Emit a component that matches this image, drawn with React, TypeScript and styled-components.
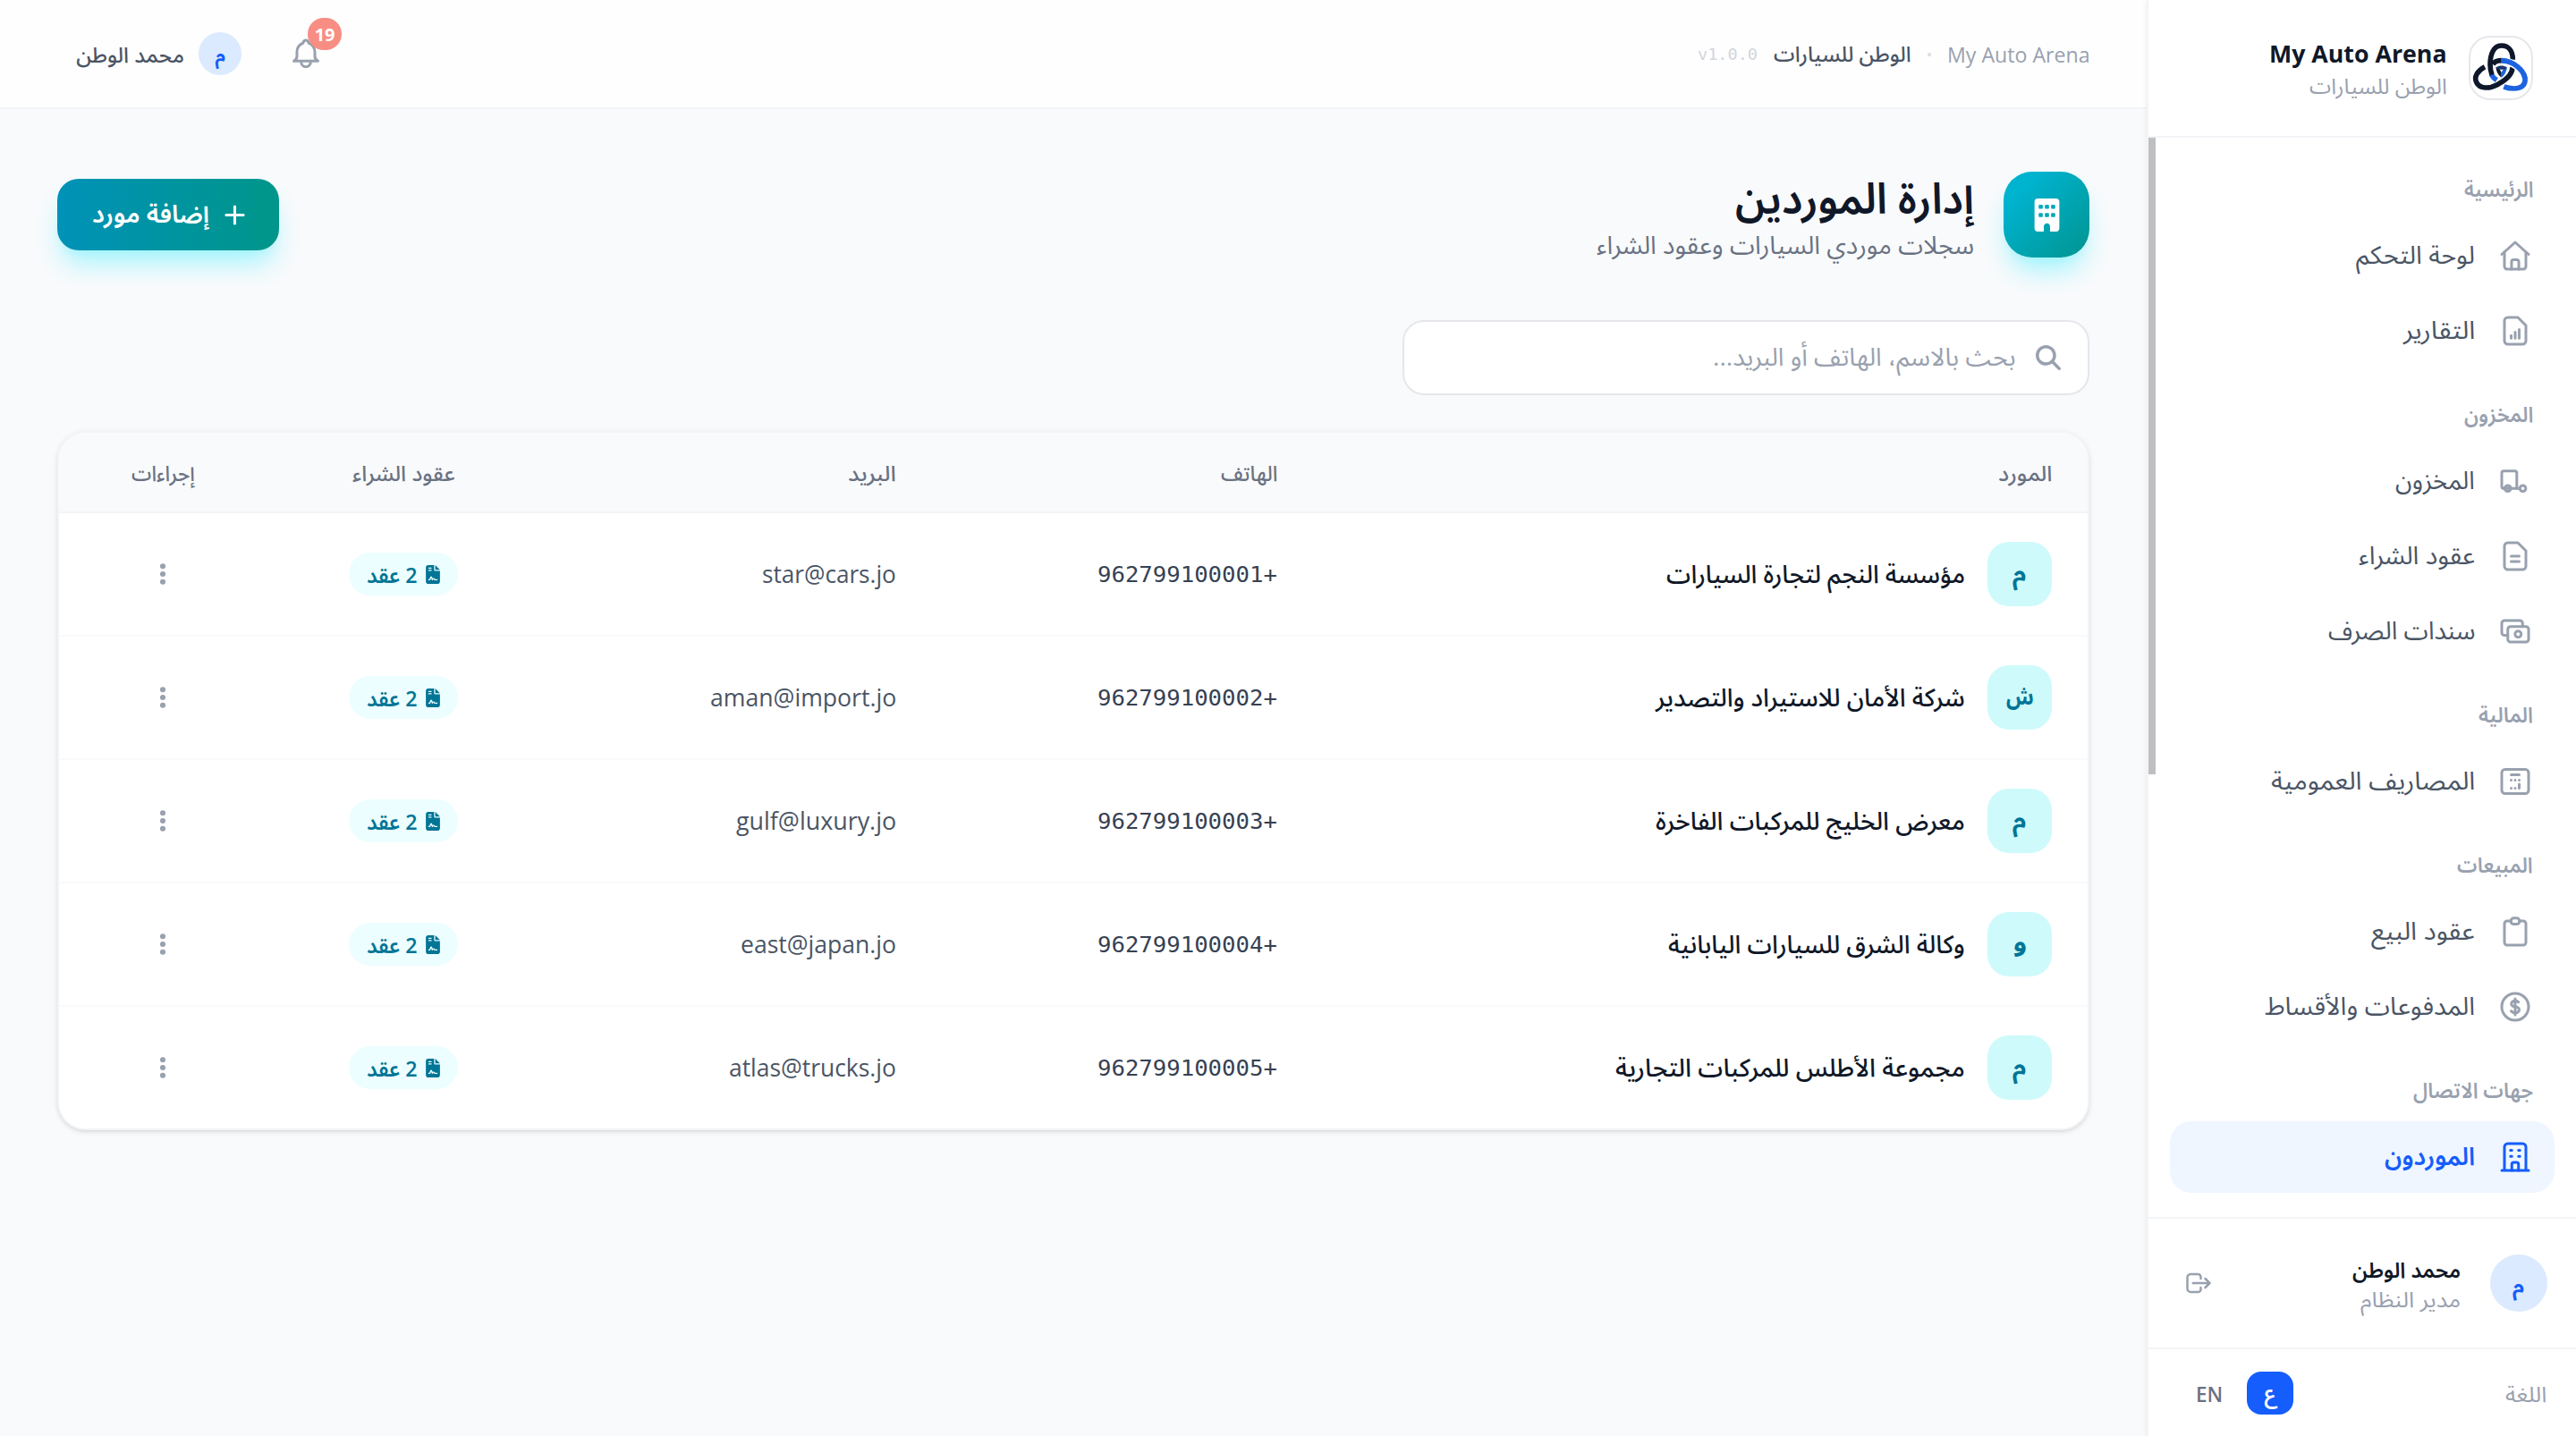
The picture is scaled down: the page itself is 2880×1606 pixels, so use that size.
import React, { useLayoutEffect, useRef, useState } from "react";
import styled, { createGlobalStyle } from "styled-components";
import { FaBuilding, FaFileContract, FaEllipsisVertical, FaMagnifyingGlass } from "react-icons/fa6";

const Global = createGlobalStyle`
  * { box-sizing: border-box; }
  html, body { margin: 0; padding: 0; }
  body {
    background: #f9fafc;
    font-family: "Open Sans", "Noto Sans", "Noto Sans Arabic", "DejaVu Sans", sans-serif;
    -webkit-font-smoothing: auto;
  }
`;

/* ---------- text that fills a known width ---------- */

type TextProps = { $size: number; $weight?: number; $color?: string; $mono?: boolean; $width: number; $drop?: number };

const TextBox = styled.span<TextProps>`
  display: block;
  flex: none;
  width: ${(p) => p.$width}px;
  height: ${(p) => Math.round(p.$size * 1.4)}px;
  line-height: ${(p) => Math.round(p.$size * 1.4)}px;
  margin-top: ${(p) => (p.$drop || 0) * 2}px;
  font-size: ${(p) => p.$size}px;
  font-weight: ${(p) => p.$weight || 400};
  color: ${(p) => p.$color || "inherit"};
  ${(p) => p.$mono && `font-family: "DejaVu Sans Mono", "Liberation Mono", monospace;`}
  white-space: nowrap;
`;

const TextInner = styled.span`
  display: inline-block;
  transform-origin: 100% 50%;
`;

function Fit({
  text,
  width,
  size,
  weight,
  color,
  mono,
  drop,
}: {
  text: string;
  width: number;
  size: number;
  weight?: number;
  color?: string;
  mono?: boolean;
  drop?: number;
}) {
  const ref = useRef<HTMLSpanElement>(null);
  const [scale, setScale] = useState(1);
  useLayoutEffect(() => {
    const measure = () => {
      if (ref.current && ref.current.offsetWidth) setScale(width / ref.current.offsetWidth);
    };
    measure();
    document.fonts?.ready.then(measure);
  }, [text, width]);
  return (
    <TextBox $size={size} $weight={weight} $color={color} $mono={mono} $width={width} $drop={drop}>
      <TextInner ref={ref} style={{ transform: `scaleX(${scale})` }}>
        {text}
      </TextInner>
    </TextBox>
  );
}

/* ---------- icons ---------- */

const Svg = styled.svg<{ $size: number; $stroke?: number }>`
  display: block;
  flex: none;
  width: ${(p) => p.$size}px;
  height: ${(p) => p.$size}px;
  fill: none;
  stroke: currentColor;
  stroke-width: ${(p) => p.$stroke || 2};
  stroke-linecap: round;
  stroke-linejoin: round;
`;

const icons = {
  home: (
    <>
      <path d="M2 11 12 2l10 9" />
      <path d="M4 9.500V20a2 2 0 0 0 2 2h12a2 2 0 0 0 2-2V9.500" />
      <path d="M9.300 22v-5.500a1.500 1.500 0 0 1 1.500-1.500h2.400a1.500 1.500 0 0 1 1.500 1.500V22" />
    </>
  ),
  report: (
    <>
      <path d="M14 2H6.500A2.500 2.500 0 0 0 4 4.500v15A2.500 2.500 0 0 0 6.500 22h11a2.500 2.500 0 0 0 2.500-2.500V8z" />
      <path d="M9 15.500v2M12 13v4.500M15 11v6.500" />
    </>
  ),
  truck: (
    <>
      <path d="M4.500 17.500H3.500A1.500 1.500 0 0 1 2 16V6a1.500 1.500 0 0 1 1.500-1.500H12A1.500 1.500 0 0 1 13.200 6v11.500" />
      <path d="M3 17.500h12.500" />
      <circle cx="6.500" cy="17.500" r="2.200" />
      <circle cx="17.700" cy="17.500" r="2.200" />
    </>
  ),
  document: (
    <>
      <path d="M14 2H6.500A2.500 2.500 0 0 0 4 4.500v15A2.500 2.500 0 0 0 6.500 22h11a2.500 2.500 0 0 0 2.500-2.500V8z" />
      <path d="M9 12h6M9 16h6" />
    </>
  ),
  cash: (
    <>
      <path d="M6.500 15H4a2 2 0 0 1-2-2V6a2 2 0 0 1 2-2h11.500a2 2 0 0 1 2 2v2" />
      <rect x="6.500" y="8.500" width="15.500" height="11.500" rx="2" />
      <circle cx="14.200" cy="14.200" r="2.300" />
    </>
  ),
  calculator: (
    <>
      <rect x="2" y="3" width="20" height="18" rx="2.500" />
      <path d="M9 7h6M9 11h.01M12 11h.01M15 11h.01M9 17h.01M12 17h.01M15 14v3" />
    </>
  ),
  clipboard: (
    <>
      <path d="M9 4H6a2 2 0 0 0-2 2v14a2 2 0 0 0 2 2h12a2 2 0 0 0 2-2V6a2 2 0 0 0-2-2h-3" />
      <rect x="8.700" y="1.800" width="6.600" height="4.600" rx="2.300" />
    </>
  ),
  dollar: (
    <>
      <circle cx="12" cy="12" r="10" />
      <path d="M12 6v12m-3-2.818.879.659c1.171.879 3.070.879 4.242 0 1.172-.879 1.172-2.303 0-3.182C13.536 12.219 12.768 12 12 12c-.725 0-1.450-.220-2.003-.659-1.106-.879-1.106-2.303 0-3.182s2.900-.879 4.006 0l.415.330" />
    </>
  ),
  building: (
    <>
      <path d="M2 22h20M4 22V4.500A2.500 2.500 0 0 1 6.500 2h11A2.500 2.500 0 0 1 20 4.500V22" />
      <path d="M9.500 22v-4.500a1.500 1.500 0 0 1 1.500-1.500h2a1.500 1.500 0 0 1 1.500 1.500V22" />
      <path d="M8.500 7h1M14.500 7h1M8.500 11.500h1M14.500 11.500h1" />
    </>
  ),
  bell: (
    <>
      <path d="M10 4a2 2 0 1 1 4 0c3 1.200 4.700 3.800 4.700 7v3.200c0 1.400 1 2.600 2.300 3.300H3c1.300-.7 2.300-1.900 2.300-3.300V11c0-3.200 1.700-5.800 4.700-7z" />
      <path d="M8.500 17.500v.9a3.500 3.500 0 0 0 7 0v-.9" />
    </>
  ),
  logout: (
    <>
      <path d="M14 8V6.500A2.500 2.500 0 0 0 11.500 4H5a3 3 0 0 0-3 3v10a3 3 0 0 0 3 3h6.500a2.500 2.500 0 0 0 2.500-2.500V16" />
      <path d="M18 8l4 4-4 4M7 12h15" />
    </>
  ),
  plus: <path d="M12 2v20M2 12h20" />,
};

type IconName = keyof typeof icons;

function Icon({ name, size = 36, stroke }: { name: IconName; size?: number; stroke?: number }) {
  return (
    <Svg $size={size} $stroke={stroke} viewBox="0 0 24 24">
      {icons[name]}
    </Svg>
  );
}

const LogoSvg = styled.svg`
  display: block;
  width: 68px;
  height: 68px;
`;

function Logo() {
  const dark = "#0f172a";
  const blue = "#1d63e0";
  return (
    <LogoSvg viewBox="18 18 204 204" fill="none">
      <path d="M130 183c11 4 22 6 34 6 26 0 40-13 37-34-4-28-38-58-79-60" stroke={blue} strokeWidth="17" />
      <path d="M122 95c-13 0-23 3-29 13" stroke={dark} strokeWidth="17" />
      <path d="M66 116c-24 13-37 33-28 52 10 22 42 23 70 8 30-16 52-36 51-60" stroke="#fff" strokeWidth="24" />
      <path d="M84 134c4 10 12 19 22 26" stroke="#fff" strokeWidth="24" />
      <path d="M66 116c-24 13-37 33-28 52 10 22 42 23 70 8 30-16 52-36 51-60" stroke={dark} strokeWidth="17" />
      <path d="M88 142c4 7 10 14 18 19" stroke={blue} strokeWidth="17" />
      <path d="M86 136c-2-7-3-14-3-22" stroke="#fff" strokeWidth="25" />
      <path d="M160 92c0-29-14-47-38-47-26 0-38 29-38 63 0 12 2 24 6 35" stroke={dark} strokeWidth="17" />
      <path d="M140 97c24 8 46 25 54 43" stroke="#fff" strokeWidth="25" />
      <path d="M122 95c41 2 75 32 79 60" stroke={blue} strokeWidth="17" />
      <path d="M103 117c2 15 8 28 19 35v-17l-7-12z" fill={dark} />
      <path d="M141 117c-2 15-8 28-19 35v-17l7-12z" fill={blue} />
      <path d="M104 118c11-7 25-7 36 0l-7 7h-22z" fill="#1b3568" />
    </LogoSvg>
  );
}

/* ---------- shell ---------- */

const Page = styled.div`
  display: flex;
  width: 2880px;
  height: 1606px;
  overflow: hidden;
  direction: rtl;
  background: #f9fafc;
`;

const Sidebar = styled.aside`
  position: relative;
  z-index: 1;
  flex: none;
  display: flex;
  flex-direction: column;
  width: 480px;
  background: #fff;
  border-left: 2px solid #f3f4f6;
  box-shadow: 0 2px 6px rgba(0, 0, 0, 0.08);
`;

const Brand = styled.div`
  display: flex;
  align-items: center;
  gap: 24px;
  height: 154px;
  padding: 0 48px 0 0;
  border-bottom: 2px solid #f3f4f6;
`;

const LogoTile = styled.div`
  width: 72px;
  height: 72px;
  border: 2px solid #e5e7eb;
  border-radius: 24px;
  overflow: hidden;
`;

const Stack = styled.div<{ $gap?: number; $top?: number }>`
  display: flex;
  flex-direction: column;
  align-items: flex-start;
  gap: ${(p) => p.$gap || 0}px;
  padding-top: ${(p) => p.$top || 0}px;
`;

const NavArea = styled.div`
  flex: 1;
  display: flex;
  min-height: 0;
`;

const Nav = styled.nav`
  flex: 1;
  padding: 4px 24px 0 16px;
`;

const ScrollThumb = styled.div`
  width: 8px;
  height: 712px;
  background: #bfbfc1;
`;

const Group = styled.div`
  display: flex;
  flex-direction: column;
  gap: 4px;
`;

const GroupTitle = styled.div`
  display: flex;
  align-items: flex-end;
  height: 84px;
  padding: 0 24px 14px 0;
`;

const NavItem = styled.a<{ $active?: boolean }>`
  display: flex;
  align-items: center;
  gap: 27px;
  height: 80px;
  padding: 0 26px;
  border-radius: 24px;
  background: ${(p) => (p.$active ? "#eff6ff" : "transparent")};
  color: ${(p) => (p.$active ? "#155dfc" : "#99a1af")};
`;

const UserPanel = styled.div`
  display: flex;
  align-items: center;
  height: 146px;
  padding: 0 32px 0 41px;
  border-top: 2px solid #f3f4f6;
  color: #99a1af;
`;

const UserText = styled(Stack)`
  flex: 1;
  padding-right: 33px;
`;

const LanguagePanel = styled.div`
  display: flex;
  align-items: center;
  height: 99px;
  padding: 0 33px 0 34px;
  border-top: 2px solid #f3f4f6;
`;

const Languages = styled.div`
  display: flex;
  gap: 8px;
  margin-right: auto;
`;

const LangButton = styled.div<{ $on?: boolean }>`
  display: flex;
  align-items: center;
  justify-content: center;
  width: ${(p) => (p.$on ? 52 : 68)}px;
  height: 48px;
  border-radius: 16px;
  background: ${(p) => (p.$on ? "#155dfc" : "transparent")};
`;

const Circle = styled.div<{ $size: number }>`
  flex: none;
  display: flex;
  align-items: center;
  justify-content: center;
  width: ${(p) => p.$size}px;
  height: ${(p) => p.$size}px;
  border-radius: 50%;
  background: #dbeafe;
`;

/* ---------- main column ---------- */

const Main = styled.main`
  flex: 1;
  min-width: 0;
`;

const TopBar = styled.header`
  display: flex;
  align-items: center;
  justify-content: space-between;
  height: 122px;
  padding: 0 64px 0 85px;
  background: #fefefe;
  border-bottom: 2px solid #f3f4f6;
`;

const Crumbs = styled.div`
  display: flex;
  align-items: center;
`;

const Dot = styled.i`
  width: 4px;
  height: 4px;
  margin: 2px 18px 0 18px;
  border-radius: 50%;
  background: #d9dce1;
`;

const Version = styled.div`
  margin: 0 18px 0 0;
`;

const Account = styled.div`
  display: flex;
  align-items: center;
  gap: 16px;
`;

const Bell = styled.div`
  position: relative;
  margin-left: 38px;
  color: #99a1af;
`;

const Badge = styled.div`
  position: absolute;
  left: 20px;
  top: -22px;
  display: flex;
  align-items: center;
  justify-content: center;
  width: 38px;
  height: 36px;
  border-radius: 18px;
  background: #f88d83;
`;

const Content = styled.div`
  padding: 70px 64px;
`;

const Heading = styled.div`
  display: flex;
  align-items: center;
  height: 96px;
`;

const HeadingTile = styled.div`
  display: flex;
  align-items: center;
  justify-content: center;
  width: 96px;
  height: 96px;
  margin-left: 33px;
  border-radius: 32px;
  color: #fff;
  background: linear-gradient(135deg, #00b3cf 20%, #009490);
  box-shadow: 0 20px 30px -6px #a2f4fd, 0 8px 12px -8px #a2f4fd;
`;

const AddButton = styled.button`
  display: flex;
  align-items: center;
  gap: 17px;
  width: 248px;
  height: 80px;
  margin: 0 auto 0 0;
  padding: 0 38px 0 0;
  border: 0;
  border-radius: 24px;
  color: #fff;
  font-family: inherit;
  background: linear-gradient(to right, #0092b8, #009689);
  box-shadow: 0 20px 30px -6px #a2f4fd, 0 8px 12px -8px #a2f4fd;
`;

const Search = styled.div`
  display: flex;
  align-items: center;
  gap: 22px;
  width: 768px;
  height: 84px;
  margin-top: 70px;
  padding: 0 30px;
  border: 2px solid #e5e7eb;
  border-radius: 24px;
  background: #fff;
  color: #99a1af;
`;

const Card = styled.section`
  margin-top: 40px;
  border: 2px solid #f3f4f6;
  border-radius: 32px;
  overflow: hidden;
  background: #fff;
  box-shadow: 0 2px 6px rgba(0, 0, 0, 0.1), 0 2px 4px -2px rgba(0, 0, 0, 0.1);
`;

const Row = styled.div<{ $head?: boolean }>`
  display: grid;
  grid-template-columns: 866px 426px 438px 306px 232px;
  align-items: center;
  height: ${(p) => (p.$head ? 90 : 138)}px;
  border-bottom: 2px solid ${(p) => (p.$head ? "#f3f4f6" : "#f9fafb")};
  background: ${(p) => (p.$head ? "#f9fafc" : "#fff")};
  &:last-child {
    height: 136px;
    border-bottom: 0;
  }
`;

const Cell = styled.div<{ $center?: boolean }>`
  display: flex;
  align-items: center;
  justify-content: ${(p) => (p.$center ? "center" : "flex-start")};
  gap: 25px;
  padding: 0 40px;
  color: #99a1af;
`;

const Initial = styled.div`
  display: flex;
  align-items: center;
  justify-content: center;
  width: 72px;
  height: 72px;
  border-radius: 24px;
  background: #cefafb;
`;

const Pill = styled.div`
  display: flex;
  align-items: center;
  gap: 9px;
  width: 122px;
  height: 48px;
  padding: 0 20px;
  border-radius: 24px;
  background: #ecfeff;
  color: #007595;
`;

const ContractIcon = styled(FaFileContract)`
  flex: none;
  width: 16px;
  height: 21px;
`;

/* ---------- data ---------- */

const groups: { title: string; width: number; items: { label: string; width: number; icon: IconName; active?: boolean }[] }[] = [
  {
    title: "الرئيسية",
    width: 77,
    items: [
      { label: "لوحة التحكم", width: 133, icon: "home" },
      { label: "التقارير", width: 80, icon: "report" },
    ],
  },
  {
    title: "المخزون",
    width: 77,
    items: [
      { label: "المخزون", width: 89, icon: "truck" },
      { label: "عقود الشراء", width: 130, icon: "document" },
      { label: "سندات الصرف", width: 164, icon: "cash" },
    ],
  },
  { title: "المالية", width: 61, items: [{ label: "المصاريف العمومية", width: 228, icon: "calculator" }] },
  {
    title: "المبيعات",
    width: 85,
    items: [
      { label: "عقود البيع", width: 116, icon: "clipboard" },
      { label: "المدفوعات والأقساط", width: 235, icon: "dollar" },
    ],
  },
  { title: "جهات الاتصال", width: 134, items: [{ label: "الموردون", width: 101, icon: "building", active: true }] },
];

const suppliers = [
  { initial: "م", name: "مؤسسة النجم لتجارة السيارات", width: 334, phone: "+962799100001", mail: "star@cars.jo", mailWidth: 150 },
  { initial: "ش", name: "شركة الأمان للاستيراد والتصدير", width: 346, phone: "+962799100002", mail: "aman@import.jo", mailWidth: 208 },
  { initial: "م", name: "معرض الخليج للمركبات الفاخرة", width: 346, phone: "+962799100003", mail: "gulf@luxury.jo", mailWidth: 179 },
  { initial: "و", name: "وكالة الشرق للسيارات اليابانية", width: 332, phone: "+962799100004", mail: "east@japan.jo", mailWidth: 174 },
  { initial: "م", name: "مجموعة الأطلس للمركبات التجارية", width: 391, phone: "+962799100005", mail: "atlas@trucks.jo", mailWidth: 187 },
];

const headers = [
  { label: "المورد", width: 60 },
  { label: "الهاتف", width: 63 },
  { label: "البريد", width: 54 },
  { label: "عقود الشراء", width: 115, center: true },
  { label: "إجراءات", width: 71, center: true },
];

export default function App() {
  return (
    <>
      <Global />
      <Page>
        <Sidebar>
          <Brand>
            <LogoTile>
              <Logo />
            </LogoTile>
            <Stack $top={2}>
              <Fit text="My Auto Arena" width={199} size={27} weight={700} color="#101828" />
              <Fit text="الوطن للسيارات" width={154} size={24} color="#99a1af" />
            </Stack>
          </Brand>
          <NavArea>
            <Nav>
              {groups.map((g) => (
                <Group key={g.title}>
                  <GroupTitle>
                    <Fit text={g.title} width={g.width} size={24} weight={600} color="#99a1af" />
                  </GroupTitle>
                  {g.items.map((it) => (
                    <NavItem key={it.label} $active={it.active}>
                      <Icon name={it.icon} />
                      <Fit
                        text={it.label}
                        width={it.width}
                        size={28}
                        weight={it.active ? 600 : 400}
                        color={it.active ? "#155dfc" : "#4a5565"}
                        drop={-1.5}
                      />
                    </NavItem>
                  ))}
                </Group>
              ))}
            </Nav>
            <ScrollThumb />
          </NavArea>
          <UserPanel>
            <Circle $size={64}>
              <Fit text="م" width={13} size={22} weight={700} color="#155dfc" drop={2} />
            </Circle>
            <UserText $top={2}>
              <Fit text="محمد الوطن" width={121} size={24} weight={600} color="#101828" />
              <Fit text="مدير النظام" width={112} size={24} color="#99a1af" drop={-0.5} />
            </UserText>
            <Icon name="logout" size={30} />
          </UserPanel>
          <LanguagePanel>
            <Fit text="اللغة" width={46} size={24} color="#99a1af" drop={1} />
            <Languages>
              <LangButton $on>
                <Fit text="ع" width={13} size={24} weight={600} color="#fff" />
              </LangButton>
              <LangButton>
                <Fit text="EN" width={30} size={24} weight={600} color="#6a7282" drop={1} />
              </LangButton>
            </Languages>
          </LanguagePanel>
        </Sidebar>

        <Main>
          <TopBar>
            <Crumbs>
              <Fit text="My Auto Arena" width={159} size={24} color="#99a1af" drop={0.5} />
              <Dot />
              <Fit text="الوطن للسيارات" width={154} size={24} weight={500} color="#4a5565" />
              <Version>
                <Fit text="v1.0.0" width={67} size={18} mono color="#d1d5dc" />
              </Version>
            </Crumbs>
            <Account>
              <Bell>
                <Icon name="bell" />
                <Badge>
                  <Fit text="19" width={23} size={20} weight={700} color="#fff" drop={1} />
                </Badge>
              </Bell>
              <Circle $size={48}>
                <Fit text="م" width={12} size={21} weight={700} color="#155dfc" drop={1.5} />
              </Circle>
              <Fit text="محمد الوطن" width={121} size={24} weight={500} color="#4a5565" drop={0.5} />
            </Account>
          </TopBar>
          <Content>
            <Heading>
              <HeadingTile>
                <FaBuilding size={37} />
              </HeadingTile>
              <Stack>
                <Fit text="إدارة الموردين" width={267} size={48} weight={600} color="#101828" />
                <Fit text="سجلات موردي السيارات وعقود الشراء" width={422} size={28} color="#6a7282" />
              </Stack>
              <AddButton>
                <Icon name="plus" size={23} stroke={3.2} />
                <Fit text="إضافة مورد" width={131} size={28} weight={600} color="#fff" drop={-1.5} />
              </AddButton>
            </Heading>
            <Search>
              <FaMagnifyingGlass size={28} />
              <Fit text="بحث بالاسم، الهاتف أو البريد..." width={339} size={28} color="#99a1af" drop={-1.5} />
            </Search>
            <Card>
              <Row $head>
                {headers.map((h) => (
                  <Cell key={h.label} $center={h.center}>
                    <Fit text={h.label} width={h.width} size={24} weight={500} color="#6a7282" drop={0.5} />
                  </Cell>
                ))}
              </Row>
              {suppliers.map((s) => (
                <Row key={s.phone}>
                  <Cell>
                    <Initial>
                      <Fit text={s.initial} width={s.initial === "ش" ? 31 : 15} size={26} weight={700} color="#007595" drop={-2} />
                    </Initial>
                    <Fit text={s.name} width={s.width} size={28} weight={500} color="#101828" drop={-1} />
                  </Cell>
                  <Cell>
                    <Fit text={s.phone} width={201} size={24} mono color="#364153" drop={1} />
                  </Cell>
                  <Cell>
                    <Fit text={s.mail} width={s.mailWidth} size={27} color="#4a5565" />
                  </Cell>
                  <Cell $center>
                    <Pill>
                      <ContractIcon />
                      <Fit text="2 عقد" width={57} size={24} weight={600} color="#007595" drop={0.5} />
                    </Pill>
                  </Cell>
                  <Cell $center>
                    <FaEllipsisVertical size={28} />
                  </Cell>
                </Row>
              ))}
            </Card>
          </Content>
        </Main>
      </Page>
    </>
  );
}
